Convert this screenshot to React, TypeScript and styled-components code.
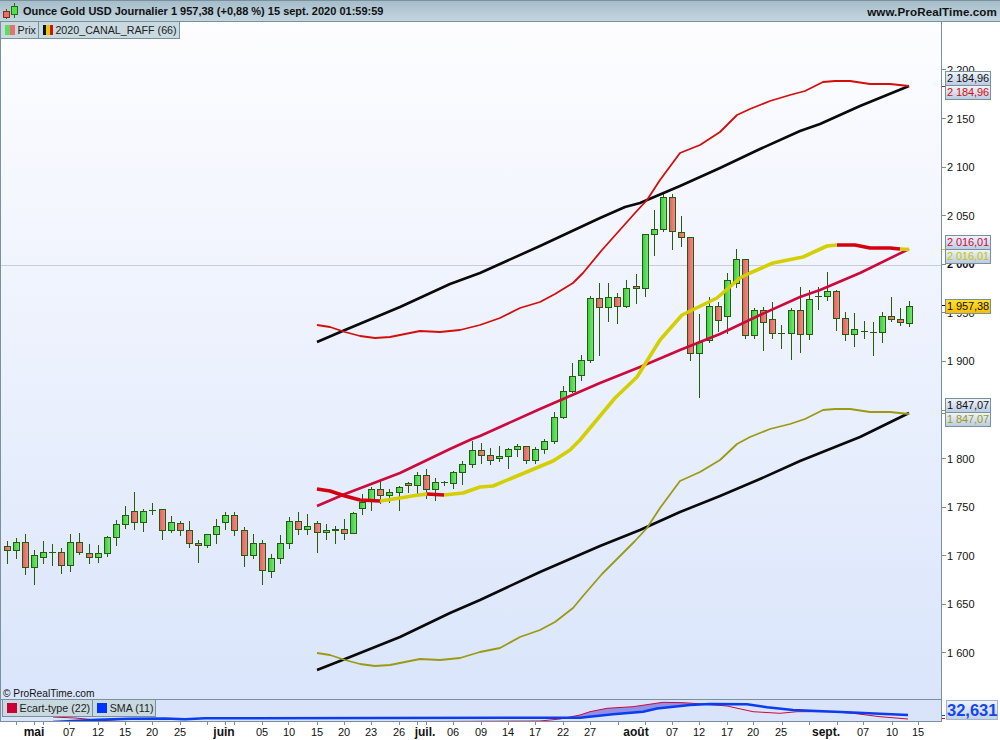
import React from "react";
import styled, { createGlobalStyle } from "styled-components";

const edge = "#7a919d";

const Global = createGlobalStyle`
  html, body { margin: 0; padding: 0; background: #fff; }
  body { font-family: "Liberation Sans", Arial, sans-serif; color: #111; }
`;

const Page = styled.div`
  width: 1000px;
  height: 740px;
  display: flex;
  flex-direction: column;
  overflow: hidden;
  background: #fff;
`;

const TitleBar = styled.header`
  height: 22px;
  box-sizing: border-box;
  display: flex;
  align-items: center;
  padding: 0 3px 0 3px;
  gap: 5px;
  border-top: 1px solid ${edge};
  border-bottom: 1px solid ${edge};
  background: linear-gradient(#a6bdca, #c2d6df);
`;

const Title = styled.h1`
  flex: 1;
  margin: 0;
  font-size: 11px;
  font-weight: 700;
  white-space: nowrap;
`;

const Site = styled.span`
  font-size: 11.6px;
  font-weight: 700;
  letter-spacing: 0.12px;
`;

const Workspace = styled.div`
  height: 700px;
  display: flex;
`;

const LeftColumn = styled.div`
  width: 941px;
  display: flex;
  flex-direction: column;
`;

const ChartPane = styled.section`
  position: relative;
  height: 677px;
  box-sizing: border-box;
  border-left: 1px solid ${edge};
  background: linear-gradient(#fdfdff, #dae5fb);
`;

const ChartSvg = styled.svg`
  position: absolute;
  inset: 0;
  display: block;
`;

const Legend = styled.div`
  position: absolute;
  top: 0;
  left: 0;
  display: flex;
  z-index: 2;
`;

const Chip = styled.div`
  height: 17px;
  box-sizing: border-box;
  display: flex;
  align-items: center;
  gap: 2.5px;
  padding: 0 2px 0 4px;
  font-size: 10.7px;
  color: #222;
  background: #c9d9e0;
  border-right: 1px solid ${edge};
  border-bottom: 1px solid ${edge};
`;

const Swatch = styled.span<{ $bg: string }>`
  width: 10px;
  height: 10px;
  flex: none;
  background: ${(p) => p.$bg};
`;

const Copyright = styled.div`
  position: absolute;
  left: 2px;
  bottom: -1px;
  height: 13px;
  line-height: 13px;
  font-size: 10.2px;
  color: #111;
  z-index: 2;
`;

const IndicatorPane = styled.section`
  position: relative;
  height: 23px;
  box-sizing: border-box;
  overflow: hidden;
  border-top: 1px solid ${edge};
  border-bottom: 1px solid ${edge};
  border-left: 1px solid ${edge};
  background: #d9e4fb;
`;

const IndicatorLegend = styled(Legend)`
  top: 0;
  left: 1px;
  border-left: 1px solid ${edge};
`;

const RightColumn = styled.aside`
  position: relative;
  width: 59px;
  box-sizing: border-box;
  border-left: 1px solid ${edge};
  padding-top: 23.7px;
  display: flex;
  flex-direction: column;
`;

const PriceRow = styled.div<{ $bold?: boolean }>`
  height: 48.58px;
  flex: none;
  display: flex;
  align-items: center;
  gap: 1px;
  font-size: 11px;
  font-weight: ${(p) => (p.$bold ? 700 : 400)};
  color: #111;
  white-space: pre;
  &::before {
    content: "";
    width: 4px;
    height: 1px;
    background: ${edge};
  }
`;

const TagStack = styled.div<{ $top: number }>`
  position: absolute;
  left: 3px;
  top: ${(p) => p.$top}px;
  width: 46px;
  display: flex;
  flex-direction: column;
`;

const Tag = styled.div<{ $color: string; $gold?: boolean }>`
  height: 15px;
  box-sizing: border-box;
  border: 1px solid ${edge};
  margin-top: -1px;
  padding-left: 1px;
  font-size: 11px;
  line-height: 13px;
  letter-spacing: -0.1px;
  white-space: pre;
  color: ${(p) => p.$color};
  background: ${(p) =>
    p.$gold
      ? "linear-gradient(#ffe033, #f8bd00)"
      : "linear-gradient(#eef3fb, #bccce2)"};
  &:first-child { margin-top: 0; }
`;

const AxisMark = styled.span<{ $top: number; $color: string }>`
  position: absolute;
  left: 0;
  top: ${(p) => p.$top}px;
  width: 3px;
  height: 1px;
  background: ${(p) => p.$color};
`;

const ValueTag = styled.div`
  position: absolute;
  left: 4px;
  top: 678px;
  width: 52px;
  height: 20px;
  box-sizing: border-box;
  border: 1px solid #a3b5c4;
  font-size: 16.5px;
  font-weight: 700;
  line-height: 18px;
  text-align: center;
  color: #1446ee;
  background: linear-gradient(#eef3fb, #c3d2e8);
`;

const TimeAxis = styled.footer`
  position: relative;
  height: 18px;
  border-bottom: 1px solid ${edge};
  box-sizing: content-box;
  margin-bottom: -1px;
`;

const TimeTick = styled.i`
  position: absolute;
  top: 0;
  width: 1px;
  height: 3px;
  background: ${edge};
`;

const TimeLabel = styled.span<{ $month?: boolean }>`
  position: absolute;
  top: 3px;
  transform: translateX(-50%);
  line-height: 14px;
  font-size: ${(p) => (p.$month ? "12px" : "11px")};
  font-weight: ${(p) => (p.$month ? 700 : 400)};
  color: #111;
  white-space: nowrap;
`;

type Candle = { x: number; top: number; bottom: number; hi: number; lo: number; up: boolean };
type Raw = [number, number, number, number, number, "g" | "r"];

const fromCrop = (ox: number, oy: number, rows: Raw[]): Candle[] =>
  rows.map(([x, t, b, h, l, k]) => ({
    x: ox + x / 3,
    top: oy + t / 3,
    bottom: oy + b / 3,
    hi: oy + h / 3,
    lo: oy + l / 3,
    up: k === "g",
  }));

const candles: Candle[] = [
  ...fromCrop(0, 480, [
    [22, 199, 212, 183, 251, "r"], [49, 187, 212, 174, 236, "g"], [76, 187, 263, 162, 284, "r"],
    [103, 226, 263, 210, 314, "g"], [130, 217, 233, 183, 251, "g"], [157, 217, 217, 192, 257, "g"],
    [184, 217, 257, 205, 281, "r"], [211, 187, 257, 162, 275, "g"], [238, 187, 217, 159, 224, "r"],
    [268, 220, 233, 192, 251, "r"], [295, 220, 233, 195, 248, "g"], [322, 172, 221, 168, 230, "g"],
    [349, 133, 173, 120, 197, "g"], [376, 106, 134, 78, 146, "g"], [403, 94, 127, 36, 149, "r"],
    [430, 94, 127, 87, 155, "g"], [457, 92, 93, 69, 104, "g"], [487, 88, 151, 88, 179, "r"],
    [514, 127, 151, 108, 158, "g"], [541, 130, 151, 124, 167, "r"], [568, 151, 190, 123, 203, "r"],
    [595, 190, 196, 180, 248, "r"], [622, 163, 196, 163, 203, "g"], [649, 139, 163, 117, 191, "g"],
    [676, 106, 127, 96, 149, "g"], [703, 106, 151, 96, 167, "r"], [733, 151, 226, 141, 260, "r"],
    [760, 190, 226, 162, 236, "g"], [787, 190, 271, 180, 314, "r"], [814, 235, 274, 222, 293, "g"],
    [841, 190, 235, 165, 251, "g"], [868, 124, 190, 111, 206, "g"], [895, 124, 148, 96, 166, "r"],
    [922, 139, 148, 102, 164, "g"], [952, 130, 157, 124, 218, "r"], [979, 151, 157, 132, 179, "g"],
    [1006, 150, 151, 138, 191, "g"],
  ]),
  ...fromCrop(330, 490, [
    [43, 118, 130, 87, 150, "r"], [70, 70, 130, 67, 133, "g"], [97, 36, 55, 12, 74, "g"],
  ]),
  ...fromCrop(340, 400, [
    [94, 268, 300, 262, 332, "g"], [121, 268, 287, 240, 312, "r"], [148, 277, 287, 267, 308, "g"],
    [178, 262, 277, 258, 332, "g"], [205, 250, 257, 247, 278, "r"], [232, 226, 256, 216, 282, "g"],
    [259, 226, 268, 207, 296, "r"], [286, 247, 268, 234, 302, "g"], [313, 248, 249, 242, 258, "g"],
    [340, 217, 250, 214, 266, "g"], [367, 193, 217, 183, 254, "g"], [397, 151, 193, 122, 203, "g"],
    [424, 151, 166, 129, 191, "r"], [451, 166, 181, 144, 194, "r"], [478, 169, 176, 138, 185, "g"],
    [505, 148, 169, 144, 206, "g"], [532, 139, 148, 132, 170, "g"], [559, 139, 181, 139, 191, "r"],
    [586, 148, 181, 141, 191, "g"], [613, 124, 148, 118, 161, "g"], [643, 52, 124, 37, 131, "g"],
  ]),
  ...fromCrop(560, 180, [
    [10, 634, 711, 618, 718, "g"], [37, 589, 634, 549, 640, "g"], [64, 541, 586, 525, 602, "g"],
    [91, 355, 541, 349, 548, "g"], [118, 355, 382, 309, 528, "r"], [145, 352, 382, 309, 425, "g"],
    [172, 352, 379, 340, 431, "r"], [199, 325, 379, 300, 383, "g"], [229, 319, 325, 282, 371, "r"],
    [256, 163, 325, 163, 350, "g"], [283, 148, 163, 90, 227, "g"], [310, 52, 148, 40, 155, "g"],
    [337, 52, 154, 43, 209, "r"], [364, 157, 172, 108, 200, "r"], [391, 172, 520, 172, 542, "r"],
    [418, 487, 520, 403, 653, "g"], [448, 379, 481, 352, 488, "g"], [475, 379, 421, 367, 457, "r"],
    [502, 301, 409, 280, 461, "g"],
  ]),
  ...fromCrop(730, 240, [
    [19, 58, 130, 28, 145, "g"], [46, 58, 286, 58, 296, "r"], [73, 211, 286, 205, 296, "g"],
    [100, 211, 247, 202, 332, "r"], [127, 238, 281, 187, 296, "r"], [154, 280, 281, 256, 326, "g"],
    [184, 211, 280, 205, 359, "g"], [211, 211, 283, 142, 338, "r"], [238, 178, 283, 151, 299, "g"],
    [265, 169, 170, 142, 209, "g"], [292, 154, 169, 97, 183, "g"], [319, 154, 235, 151, 272, "r"],
    [346, 235, 283, 217, 302, "r"], [373, 268, 283, 220, 320, "g"], [403, 275, 276, 244, 296, "g"],
    [430, 277, 278, 247, 347, "g"], [457, 229, 277, 217, 308, "g"], [484, 229, 238, 172, 245, "r"],
    [511, 238, 247, 205, 257, "r"], [538, 199, 250, 184, 260, "g"],
  ]),
];

type Pt = [number, number];
const pts = (a: Pt[]) => a.map(([x, y]) => `${x},${y}`).join(" ");

const blackUpper: Pt[] = [[317, 342], [345, 330], [400, 307], [450, 284], [480, 273], [540, 246], [600, 218], [625, 207], [640, 203], [680, 186], [720, 168], [760, 149], [800, 131], [820, 124], [860, 106], [909, 86]];
const crimson: Pt[] = [[317, 506], [345, 494], [400, 473], [450, 449], [472, 439], [480, 436], [540, 409], [600, 383], [640, 367], [680, 350], [720, 334], [760, 315], [800, 297], [820, 290], [860, 273], [909, 249]];
const blackLower: Pt[] = [[317, 670], [345, 659], [400, 637], [450, 613], [480, 600], [540, 572], [600, 546], [640, 530], [680, 512], [720, 496], [760, 479], [800, 461], [820, 453], [860, 437], [909, 413]];
const upperRed: Pt[] = [[317, 325], [330, 327], [345, 332], [360, 336], [375, 338], [390, 337], [405, 334], [420, 331], [440, 332], [460, 330], [480, 325], [500, 318], [520, 308], [540, 302], [555, 294], [573, 283], [583, 273], [602, 250], [635, 213], [647, 200], [660, 180], [680, 153], [700, 145], [720, 132], [737, 115], [750, 109], [770, 101], [790, 95], [805, 91], [823, 82], [835, 81], [850, 81], [870, 84], [890, 84], [909, 86]];
const lowerOlive: Pt[] = [[317, 653], [330, 655], [345, 660], [360, 664], [375, 666], [390, 665], [405, 662], [420, 659], [440, 660], [460, 658], [480, 652], [500, 648], [520, 637], [540, 630], [555, 622], [573, 608], [583, 596], [602, 574], [635, 541], [647, 528], [660, 508], [680, 481], [700, 472], [720, 460], [737, 444], [750, 437], [770, 429], [790, 424], [805, 419], [823, 410], [835, 409], [850, 409], [870, 412], [890, 412], [909, 414]];
const midRedA: Pt[] = [[317, 489], [330, 491], [345, 496], [360, 500], [380, 501]];
const midYellowA: Pt[] = [[380, 501], [400, 498], [415, 495.5], [427, 494]];
const midRedB: Pt[] = [[427, 494], [444, 495]];
const midYellowB: Pt[] = [[444, 495], [463, 493], [480, 487], [493, 486], [517, 476], [553, 461], [570, 450], [580, 440], [615, 398], [637, 377], [660, 340], [682, 315], [717, 298], [740, 278], [750, 273], [773, 263], [803, 257], [827, 246], [837, 245]];
const midRedC: Pt[] = [[837, 245], [855, 245], [870, 248], [890, 248], [900, 249]];
const midYellowC: Pt[] = [[900, 249], [909, 249.5]];

const indBlue: Pt[] = [[53, 722], [97, 719.8], [130, 718.7], [165, 718.5], [185, 719.2], [205, 718.3], [580, 717.7], [613, 714.3], [643, 711.7], [657, 708.5], [690, 705], [710, 704], [747, 704.3], [767, 707.3], [793, 710], [847, 712.3], [880, 713.7], [908, 715]];
const indRed: Pt[] = [[53, 717], [75, 718], [97, 720], [120, 721.5], [170, 722], [300, 722], [540, 721], [560, 719], [580, 715], [590, 711.7], [607, 708.3], [633, 706.7], [663, 702.3], [683, 702.7], [703, 704], [727, 706], [753, 711.7], [780, 713.3], [797, 711.7], [830, 711.7], [853, 713.3], [880, 716.7], [908, 719]];

const priceRows = ["2 200", "2 150", "2 100", "2 050", "2 000", "1 950", "1 900", "1 850", "1 800", "1 750", "1 700", "1 650", "1 600"];

const timeTicks = [16, 34, 43, 69, 98, 125, 152, 180, 207, 225, 234, 262, 288, 317, 344, 371, 399, 417, 426, 453, 481, 508, 535, 563, 590, 618, 645, 672, 699, 727, 753, 782, 809, 837, 863, 892, 918];
const timeLabels: { x: number; t: string; month?: boolean }[] = [
  { x: 34, t: "mai", month: true }, { x: 69, t: "07" }, { x: 98, t: "12" }, { x: 125, t: "15" }, { x: 152, t: "20" }, { x: 180, t: "25" },
  { x: 224, t: "juin", month: true }, { x: 262, t: "05" }, { x: 289, t: "10" }, { x: 317, t: "15" }, { x: 344, t: "20" }, { x: 371, t: "23" }, { x: 399, t: "26" },
  { x: 425, t: "juil.", month: true }, { x: 453, t: "06" }, { x: 481, t: "09" }, { x: 508, t: "14" }, { x: 535, t: "17" }, { x: 563, t: "22" }, { x: 590, t: "27" },
  { x: 636, t: "août", month: true }, { x: 672, t: "07" }, { x: 699, t: "12" }, { x: 727, t: "17" }, { x: 753, t: "20" }, { x: 781, t: "25" },
  { x: 826, t: "sept.", month: true }, { x: 863, t: "07" }, { x: 892, t: "10" }, { x: 918, t: "15" },
];

const Line = ({ p, c, w }: { p: Pt[]; c: string; w: number }) => (
  <polyline points={pts(p)} fill="none" stroke={c} strokeWidth={w} strokeLinejoin="round" />
);

const CandleMark = ({ d }: { d: Candle }) => {
  const dark = "#265a0c";
  const h = Math.max(d.bottom - d.top, 1);
  return (
    <g shapeRendering="crispEdges">
      <line x1={d.x} x2={d.x} y1={d.hi} y2={d.lo} stroke={dark} strokeWidth={1} />
      {h <= 1 ? (
        <line x1={d.x - 3.5} x2={d.x + 3.5} y1={d.top} y2={d.top} stroke={dark} strokeWidth={1.5} />
      ) : (
        <rect x={d.x - 3} y={d.top} width={6} height={h} fill={d.up ? "url(#up)" : "url(#dn)"} stroke={dark} strokeWidth={1} />
      )}
    </g>
  );
};

const TitleIcon = () => (
  <svg width="15" height="17" viewBox="0 0 15 17">
    <path d="M3.5 6v10M11.5 0v15" stroke="#2d6a12" fill="none" />
    <rect x="0.5" y="8.5" width="6" height="6" fill="#ee6b6b" stroke="#7a3020" />
    <rect x="8.5" y="3.5" width="6" height="8" fill="#4fe04f" stroke="#2d6a12" />
  </svg>
);

export default function App() {
  return (
    <Page>
      <Global />
      <TitleBar>
        <TitleIcon />
        <Title>Ounce Gold USD Journalier 1 957,38 (+0,88 %) 15 sept. 2020 01:59:59</Title>
        <Site>www.ProRealTime.com</Site>
      </TitleBar>
      <Workspace>
        <LeftColumn>
          <ChartPane>
            <ChartSvg width="940" height="677" viewBox="1 22 940 677">
              <defs>
                <linearGradient id="up">
                  <stop offset="0" stopColor="#38c838" />
                  <stop offset="1" stopColor="#78ea78" />
                </linearGradient>
                <linearGradient id="dn">
                  <stop offset="0" stopColor="#e05e5e" />
                  <stop offset="1" stopColor="#f08f86" />
                </linearGradient>
              </defs>
              <line x1="1" x2="941" y1="265.5" y2="265.5" stroke="#c9ccda" />
              {candles.map((d, i) => (
                <CandleMark key={i} d={d} />
              ))}
              <Line p={blackUpper} c="#0a0a0a" w={2.6} />
              <Line p={blackLower} c="#0a0a0a" w={2.6} />
              <Line p={upperRed} c="#d40d0d" w={1.8} />
              <Line p={lowerOlive} c="#9b9a12" w={1.8} />
              <Line p={crimson} c="#cc0a3c" w={2.6} />
              <Line p={midYellowA} c="#d4cf00" w={3.6} />
              <Line p={midYellowB} c="#d4cf00" w={3.6} />
              <Line p={midYellowC} c="#d4cf00" w={3.6} />
              <Line p={midRedA} c="#d40010" w={3.6} />
              <Line p={midRedB} c="#d40010" w={3.6} />
              <Line p={midRedC} c="#d40010" w={3.6} />
            </ChartSvg>
            <Legend>
              <Chip>
                <Swatch $bg="linear-gradient(90deg, #5fdc5f 50%, #e86f6f 50%)" />
                Prix
              </Chip>
              <Chip>
                <Swatch $bg="linear-gradient(90deg, #111 33%, #e8c800 33% 66%, #d01010 66%)" />
                2020_CANAL_RAFF (66)
              </Chip>
            </Legend>
            <Copyright>© ProRealTime.com</Copyright>
          </ChartPane>
          <IndicatorPane>
            <ChartSvg width="940" height="21" viewBox="1 700 940 21">
              <polygon points={pts([...indRed.filter((p) => p[0] >= 560 && p[0] <= 703), ...indBlue.filter((p) => p[0] >= 560 && p[0] <= 703).reverse()])} fill="#8f90e6" />
              <Line p={indRed} c="#cc0a3c" w={1} />
              <Line p={indBlue} c="#0a3cf0" w={2.5} />
            </ChartSvg>
            <IndicatorLegend>
              <Chip>
                <Swatch $bg="#cc0033" />
                Ecart-type (22)
              </Chip>
              <Chip>
                <Swatch $bg="#0033ff" />
                SMA (11)
              </Chip>
            </IndicatorLegend>
          </IndicatorPane>
        </LeftColumn>
        <RightColumn>
          {priceRows.map((p) => (
            <PriceRow key={p} $bold={p === "2 000"}>
              {p}
            </PriceRow>
          ))}
          <AxisMark $top={64} $color="#d40d0d" />
          <AxisMark $top={227} $color="#d4cf00" />
          <AxisMark $top={283} $color="#111" />
          <AxisMark $top={391} $color="#9b9a12" />
          <AxisMark $top={693} $color="#0a3cf0" />
          <AxisMark $top={696} $color="#cc0a3c" />
          <TagStack $top={49}>
            <Tag $color="#111">2 184,96</Tag>
            <Tag $color="#d40d0d">2 184,96</Tag>
          </TagStack>
          <TagStack $top={213}>
            <Tag $color="#cc0a3c">2 016,01</Tag>
            <Tag $color="#c9c400">2 016,01</Tag>
          </TagStack>
          <TagStack $top={277}>
            <Tag $color="#111" $gold>1 957,38</Tag>
          </TagStack>
          <TagStack $top={376}>
            <Tag $color="#111">1 847,07</Tag>
            <Tag $color="#9b9a12">1 847,07</Tag>
          </TagStack>
          <ValueTag>32,631</ValueTag>
        </RightColumn>
      </Workspace>
      <TimeAxis>
        {timeTicks.map((x) => (
          <TimeTick key={x} style={{ left: x }} />
        ))}
        {timeLabels.map((l) => (
          <TimeLabel key={`${l.t}${l.x}`} $month={l.month} style={{ left: l.x }}>
            {l.t}
          </TimeLabel>
        ))}
      </TimeAxis>
    </Page>
  );
}
